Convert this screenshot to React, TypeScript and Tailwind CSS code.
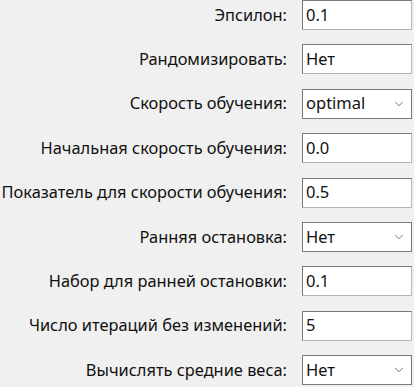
import { ChevronDown } from "lucide-react";

type Field = { label: string; value: string; select?: boolean };

const fields: Field[] = [
  { label: "Эпсилон:", value: "0.1" },
  { label: "Рандомизировать:", value: "Нет" },
  { label: "Скорость обучения:", value: "optimal", select: true },
  { label: "Начальная скорость обучения:", value: "0.0" },
  { label: "Показатель для скорости обучения:", value: "0.5" },
  { label: "Ранняя остановка:", value: "Нет", select: true },
  { label: "Набор для ранней остановки:", value: "0.1" },
  { label: "Число итераций без изменений:", value: "5" },
  { label: "Вычислять средние веса:", value: "Нет", select: true },
];

export default function App() {
  return (
    <div
      className="w-[414px] h-[387px] overflow-hidden bg-[#f0f0f0] text-[#111111]"
      style={{ fontFamily: '"Noto Sans", "Open Sans", sans-serif' }}
    >
      <div className="grid grid-cols-[288px_110px] auto-rows-[30px] gap-y-[14.4px] gap-x-[14px]">
        {fields.map((f) => (
          <Row key={f.label} field={f} />
        ))}
      </div>
    </div>
  );
}

function Row({ field }: { field: Field }) {
  return (
    <>
      <div className="flex items-center justify-end whitespace-nowrap text-[16.4px] pr-[1px]">
        {field.label}
      </div>
      {field.select ? (
        <div className="flex items-center justify-between border border-[#7a7a7a] bg-white pl-[3px] pr-[5px] text-[16.5px]">
          <span>{field.value}</span>
          <ChevronDown className="w-[14px] h-[14px] text-[#606060]" strokeWidth={1.5} />
        </div>
      ) : (
        <div className="flex items-center border border-[#b4b4b4] border-t-[#7a7a7a] border-l-[#7a7a7a] bg-white pl-[3px] text-[16.5px]">
          {field.value}
        </div>
      )}
    </>
  );
}
